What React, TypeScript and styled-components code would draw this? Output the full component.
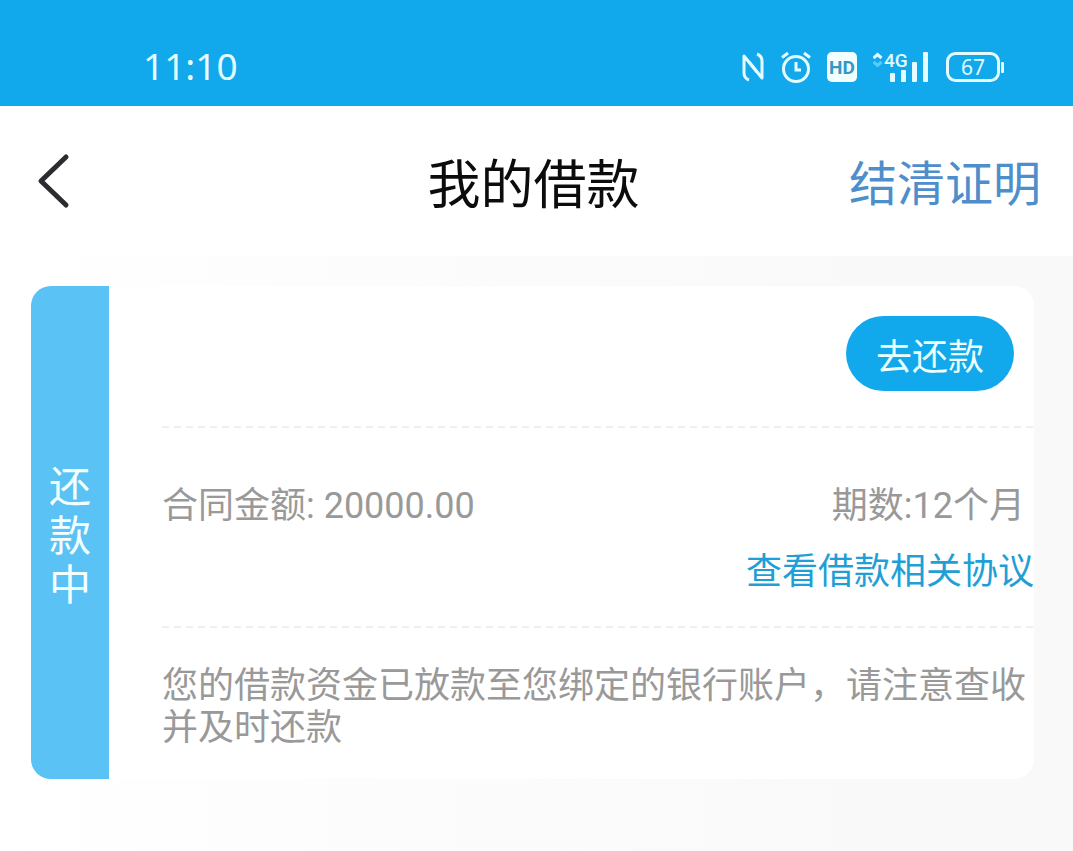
import React from 'react';
import styled, { createGlobalStyle } from 'styled-components';

const GlobalStyle = createGlobalStyle`
  * { box-sizing: border-box; }
  body {
    margin: 0;
    background: #fff;
    font-family: Roboto, 'Noto Sans CJK SC', sans-serif;
  }
  h1, p { margin: 0; font-weight: 400; }
  button { font: inherit; border: 0; padding: 0; cursor: pointer; }
  a { text-decoration: none; }
  svg { display: block; }
`;

const Screen = styled.div`
  display: flex;
  flex-direction: column;
  min-height: 100vh;
`;

const StatusBar = styled.div`
  display: flex;
  align-items: flex-end;
  justify-content: space-between;
  height: 106px;
  padding: 0 68px 20px 143px;
  background: #11a8ec;
  color: #e4fcff;
`;

const Clock = styled.time`
  font-family: 'Noto Sans', sans-serif;
  font-size: 37px;
  line-height: 40px;
`;

const StatusIcons = styled.div`
  display: flex;
  align-items: center;
  gap: 16px;
`;

const Header = styled.header`
  display: grid;
  grid-template-columns: 1fr auto 1fr;
  align-items: center;
  height: 150px;
  padding: 0 32px 0 26px;
  background: #fff;
`;

const BackButton = styled.button`
  justify-self: start;
  background: none;
  color: #2b2c30;
`;

const Title = styled.h1`
  padding-top: 10px;
  font-size: 53px;
  line-height: 60px;
  color: #0c0c0c;
`;

const HeaderLink = styled.a`
  justify-self: end;
  padding-top: 8px;
  font-size: 48px;
  line-height: 60px;
  color: #4e8ecb;
`;

const Content = styled.main`
  flex: 1;
  padding: 30px 39px 72px 31px;
  background: linear-gradient(to right, #fff 0%, #fcfcfc 40%, #f9f9f9 80%);
`;

const Card = styled.article`
  display: flex;
  border-radius: 20px;
  overflow: hidden;
  background: #fff;
`;

const StatusRail = styled.div`
  display: flex;
  align-items: center;
  justify-content: center;
  width: 78px;
  padding: 8px 18px 0;
  background: #5ac2f5;
  color: #f2ffff;
  font-size: 42px;
  line-height: 49px;
  text-align: center;
`;

const CardBody = styled.div`
  flex: 1;
  padding-left: 53px;
`;

const Divider = styled.hr`
  height: 2px;
  margin: 0;
  border: 0;
  background: repeating-linear-gradient(to right, #efefef 0 7px, transparent 7px 12px);
`;

const ActionRow = styled.div`
  display: flex;
  justify-content: flex-end;
  padding: 30px 20px 35px;
`;

const RepayButton = styled.button`
  width: 168px;
  height: 75px;
  border-radius: 38px;
  background: #11a8ec;
  color: #ecffff;
  font-size: 36px;
`;

const Details = styled.div`
  display: flex;
  flex-direction: column;
  gap: 24px;
  padding: 57px 0 33px;
  font-size: 36px;
  line-height: 42px;
  color: #999;
`;

const DetailRow = styled.div`
  display: flex;
  justify-content: space-between;
  padding-right: 9px;
`;

const AgreementLink = styled.a`
  align-self: flex-end;
  color: #1f9fd6;
`;

const Notice = styled.p`
  padding: 37px 0 30px;
  font-size: 36px;
  line-height: 42px;
  color: #999;
`;

function NfcIcon() {
  return (
    <svg width="24" height="30" viewBox="0 0 24 30" fill="none" stroke="currentColor" strokeWidth="3" strokeLinejoin="round">
      <path d="M8 28Q3 26 3 21V4L16 20" />
      <path d="M16 2Q21 4 21 9V26L8 10" />
    </svg>
  );
}

function AlarmIcon() {
  return (
    <svg width="30" height="32" viewBox="0 0 30 32" fill="none" stroke="currentColor" strokeWidth="3">
      <circle cx="15" cy="18" r="12.5" />
      <path d="M15 11V19H20M1 6.5L7 2M29 6.5L23 2" />
    </svg>
  );
}

function HdIcon() {
  return (
    <svg width="30" height="30" viewBox="0 0 30 30">
      <rect width="30" height="30" rx="5" fill="#f2ffff" />
      <text x="15" y="22" textAnchor="middle" fontFamily="Roboto, sans-serif" fontSize="19" fontWeight="700" fill="#3299c4">HD</text>
    </svg>
  );
}

function SignalIcon() {
  return (
    <svg width="57" height="38" viewBox="0 -4 57 38" fill="currentColor">
      <path d="M0.500 6L4.500 2.500L8.500 6" fill="none" stroke="currentColor" strokeWidth="3" />
      <path d="M0.500 10L4.500 13.500L8.500 10" fill="none" stroke="#55cdf8" strokeWidth="3" />
      <text x="11" y="15" fontFamily="Roboto, sans-serif" fontSize="19" fontWeight="500">4G</text>
      <rect x="17" y="21" width="5" height="9" rx="1" />
      <rect x="28" y="18" width="5" height="12" rx="1" />
      <rect x="39" y="10" width="5" height="20" rx="1" />
      <rect x="50" y="0" width="5" height="30" rx="1" />
    </svg>
  );
}

function BatteryIcon() {
  return (
    <svg width="59" height="30" viewBox="0 0 59 30">
      <rect x="1.500" y="1.500" width="51" height="27" rx="8" fill="none" stroke="currentColor" strokeWidth="3" />
      <rect x="55" y="10" width="3" height="11" rx="1" fill="currentColor" />
      <text x="27" y="23" textAnchor="middle" fontFamily="'Noto Sans', sans-serif" fontSize="21" fill="currentColor">67</text>
    </svg>
  );
}

export default function App() {
  return (
    <Screen>
      <GlobalStyle />
      <StatusBar>
        <Clock>11:10</Clock>
        <StatusIcons>
          <NfcIcon />
          <AlarmIcon />
          <HdIcon />
          <SignalIcon />
          <BatteryIcon />
        </StatusIcons>
      </StatusBar>
      <Header>
        <BackButton type="button" aria-label="返回">
          <svg width="46" height="60" viewBox="0 0 46 60" fill="none" stroke="currentColor" strokeWidth="5" strokeLinecap="round" strokeLinejoin="round">
            <path d="M40 6L15 30L40 54" />
          </svg>
        </BackButton>
        <Title>我的借款</Title>
        <HeaderLink href="#certificate">结清证明</HeaderLink>
      </Header>
      <Content>
        <Card>
          <StatusRail>还款中</StatusRail>
          <CardBody>
            <ActionRow>
              <RepayButton type="button">去还款</RepayButton>
            </ActionRow>
            <Divider />
            <Details>
              <DetailRow>
                <span>合同金额: 20000.00</span>
                <span>期数:12个月</span>
              </DetailRow>
              <AgreementLink href="#agreement">查看借款相关协议</AgreementLink>
            </Details>
            <Divider />
            <Notice>您的借款资金已放款至您绑定的银行账户，请注意查收并及时还款</Notice>
          </CardBody>
        </Card>
      </Content>
    </Screen>
  );
}
